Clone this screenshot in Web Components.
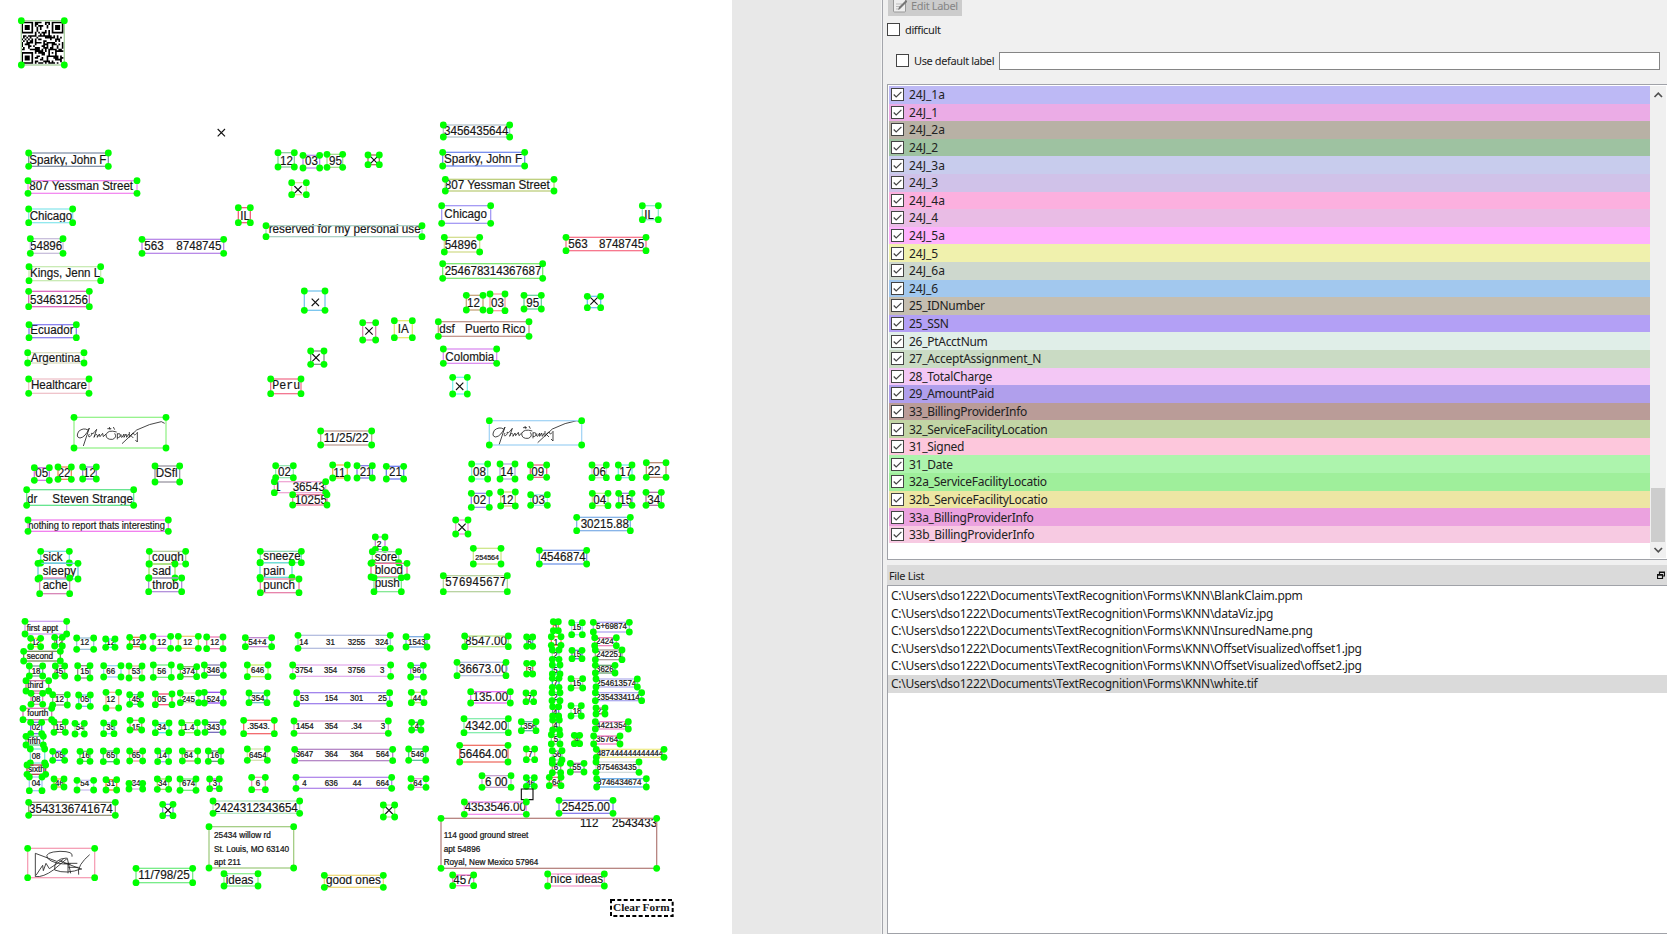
<!DOCTYPE html>
<html lang="en"><head><meta charset="utf-8"><title>Form labels</title>
<style>html,body{margin:0;height:100%;overflow:hidden;background:#f0f0f0}</style></head>
<body><label-app></label-app>
<script>
// Every sheet tile: origin in px, then shapes in thirds of a pixel:
// x1 y1 x2 y2 colour | x baseline size text | ...   ("-" as the box means free text, "X" is a check mark)
const TILES=[
[0,0,`64 62 193 195 #a8cfa0|QR
-|664 398 X`],
[0,140,`86 39 325 79 #8796ab|88 71 11.6 Sparky, John F
84 122 411 160 #f28cf0|88 151 11.6 807 Yessman Street
86 207 218 248 #91e8ee|89 240 11.6 Chicago
91 296 189 340 #c9c0dc|90 331 11.6 54896
426 298 671 340 #b98be8|433 330 11.6 563|529 330 11.6 8748745
87 380 302 422 #c9ebb5|90 412 11.6 Kings, Jenn L
86 454 268 500 #dc6cc0|90 491 11.6 534631256
87 554 229 593 #8c84ee|91 582 11.6 Ecuador
83 638 252 669 #dce0c4|92 667 11.6 Argentina
86 717 267 760 #efc4cb|93 748 11.6 Healthcare
834 38 883 81 #8fcf9f|840 74 11.6 12
909 46 959 84 #bd90ee|915 74 11.6 03
981 43 1028 82 #a6df90|987 74 11.6 95
1104 45 1138 74 #b06c6c|1122 60 X
875 128 919 164 #e2e3a0|894 149 X
715 203 751 248 #f0627c|721 239 11.6 IL
798 257 1266 290 #aed2c6|806 279 11.75 reserved for my personal use
913 453 975 511 #7cc6ee|946 487 X
1088 548 1127 600 #d88bb0|1107 573 X
932 633 972 673 #89968c|948 653 X
812 717 903 761 #f27892|817 748 m11.6 Peru`],
[370,110,`220 45 419 81 #b8c6cc|222 74 11.6 3456435644
218 127 464 168 #7990ee|222 159 11.75 Sparky, John F
226 208 552 243 #bfd080|224 237 11.75 807 Yessman Street
215 287 362 340 #a69cf4|223 325 11.6 Chicago
223 382 329 426 #d5df92|224 416 11.6 54896
218 461 518 505 #7ee875|224 495 11.6 254678314367687
817 287 865 329 #90e8cc|823 326 11.6 IL
588 382 828 422 #f7788e|595 415 11.6 563|687 413 11.6 8748745
289 556 339 600 #c8a77e|291 591 11.6 12
360 552 405 602 #f7a6a0|363 590 11.6 03
462 556 514 597 #70cfa0|469 590 11.6 95
652 559 692 593 #72bdf0|672 573 X
73 632 127 683 #e5e878|83 668 11.6 IA
205 635 477 679 #c49a90|208 668 11.6 dsf|285 668 11.6 Puerto Rico
220 717 380 760 #dc90f0|226 752 11.6 Colombia
248 802 292 852 #81f0ee|269 829 X`],
[0,400,`222 52 498 144 #98f28e|SIG
962 93 1115 135 #c0a298|971 127 11.75 11/25/22
103 203 148 241 #d47ae6|106 232 11.6 05
174 201 214 238 #ef9160|173 232 11.6 22
248 201 289 237 #a080d8|249 232 11.6 12
465 198 539 246 #9d9aa4|467 231 11.6 DSfl
80 269 401 316 #67e590|81 309 11.6 dr|157 309 11.7 Steven Strange
84 360 505 394 #f180ee|85 388 9.35 nothing to report thats interesting
122 454 208 489 #7edce0|128 483 11.6 sick
114 490 234 537 #70c9dc|128 525 11.6 sleepy
119 534 209 581 #d888b8|128 567 11.6 ache
448 454 557 492 #b8ce9d|456 484 11.6 cough
447 492 525 534 #a2e46d|457 525 11.6 sad
446 534 545 575 #b392db|457 567 11.6 throb
781 454 904 488 #8ed9b5|790 480 11.6 sneeze
780 488 876 532 #71ddd9|790 524 11.6 pain
781 537 897 578 #e784ab|790 567 11.6 punch
827 197 880 233 #9ae8b5|834 229 11.6 02
823 245 977 278 #efaad5|823 272 11.6 1|878 272 11.6 36543
878 284 981 315 #e6829e|884 313 11.6 10255
998 195 1042 234 #f0b952|1000 230 11.6 11`],
[360,400,`388 62 665 135 #a7d6f5|SIG2
-9 197 37 234 #8980e8|-1 228 11.6 21
79 199 131 237 #7180ee|87 228 11.6 21
335 192 383 237 #91eee0|339 227 11.6 08
420 192 465 237 #b7aee2|421 227 11.6 14
511 195 560 232 #ee6683|514 227 11.6 09
696 195 739 233 #e0c8dc|699 227 11.6 06
775 195 816 233 #82e8ec|778 227 11.6 17
859 188 918 232 #b98e76|863 226 11.6 22
334 280 388 322 #968cf0|340 312 11.6 02
422 276 466 318 #d1d779|422 312 11.6 12
512 284 562 316 #a8eee9|516 312 11.6 03
697 280 744 317 #bff192|700 312 11.6 04
776 280 816 316 #a481dd|778 312 11.6 15
858 277 904 316 #b077a8|862 311 11.6 34
287 360 324 402 #f29bd5|306 382 X
650 352 811 392 #88b4e8|662 384 11.6 30215.88
340 445 423 492 #cfe78d|346 479 7.1 254564
538 451 680 492 #779be8|542 483 11.6 4546874
46 411 75 448 #ca7de2|50 440 8.4 2
37 455 116 488 #a8c9b7|44 483 11.6 sore
33 490 141 531 #ec739e|44 523 11.6 blood
42 533 124 575 #86e895|44 562 11.6 push
250 527 442 575 #b9d3a2|255 559 m11.4 576945677`],
[0,610,`75 34 200 72 #cfa4f0|80 64 8.2 first appt
92 85 122 110 #eeee3b|95 105 7.9 12
164 82 187 108 #bb779c|163 105 7.9 12
230 84 281 118 #9ec3d8|241 105 7.9 12
317 87 345 112 #59e4e8|319 105 7.9 12
389 82 429 110 #ef824f|395 105 7.9 12
459 79 512 115 #e29af3|472 105 7.9 12
535 79 595 115 #efca7d|550 105 7.9 12
620 81 669 116 #ee81b8|631 105 7.9 12
71 124 181 153 #7d8d60|80 148 8.2 second
88 168 128 198 #81a59b|95 191 7.9 18
166 168 194 198 #e27db3|163 191 7.9 45
233 167 270 204 #9d8693|241 191 7.9 15
311 167 363 201 #9dd1ef|319 191 7.9 66
387 168 426 204 #e4b9a2|395 191 7.9 53
460 165 514 202 #7de88d|472 191 7.9 56
541 170 590 200 #90b173|545 191 7.9 374
613 165 670 196 #9088b3|620 189 7.9 346
78 212 146 243 #c47799|82 234 8.2 third
93 250 128 283 #db8db9|95 276 7.9 08
158 254 202 285 #979e8f|165 276 7.9 12
236 255 271 289 #79bae6|241 276 7.9 05
318 247 356 294 #f2b294|319 276 7.9 12
389 254 422 283 #6caaa9|395 275 7.9 45
466 252 516 284 #ef587b|472 275 7.9 05
541 249 596 278 #d9e1c2|545 275 7.9 245
613 247 670 279 #9556ed|620 275 7.9 524
69 295 155 329 #d87bb4|82 318 8.2 fourth
92 337 125 371 #7771e8|95 361 7.9 02
162 336 196 367 #ae7e79|165 360 7.9 15
225 340 253 372 #b0e9ab|227 360 7.9 54
311 339 342 371 #8fc6ec|319 360 7.9 35
390 331 425 360 #d78c90|395 360 7.9 15
466 339 507 368 #5ee0eb|472 360 7.9 34
545 338 592 368 #a7e37c|550 360 7.9 1.4
615 337 669 367 #7b70bd|620 360 7.9 343
78 379 130 405 #71c694|82 401 8.2 fifth
91 417 134 459 #82e6dc|95 446 7.9 08
158 424 194 451 #7581ec|165 445 7.9 05
240 424 270 454 #74bf7a|243 445 7.9 16
310 423 350 455 #6aae88|319 445 7.9 65
389 423 428 453 #f097a0|395 445 7.9 65
473 423 506 455 #aaabf1|474 445 7.9 14
547 423 593 453 #b9a479|552 445 7.9 64
625 423 663 454 #718e87|631 445 7.9 16
81 465 137 493 #b54955|84 486 8.2 sixth
88 501 126 542 #a9c8f4|95 529 7.9 04
162 507 192 531 #edb152|165 529 7.9 46
231 511 281 540 #ccc2ef|241 529 7.9 54
318 509 350 540 #ef912d|319 529 7.9 31
387 520 428 537 #d8b1e6|395 529 7.9 34
472 507 506 538 #a6d66c|474 529 7.9 34
540 507 588 541 #7ee884|546 529 7.9 674
629 507 658 536 #d43ee5|638 529 7.9 3`],
[230,610,`46 83 125 110 #c28ad0|55 104 8.1 54+4
204 76 481 115 #b6bfe0|208 104 7.9 14|288 104 7.9 31|353 104 7.9 3255|436 104 7.9 324
528 80 591 111 #80ade1|534 104 7.9 1543
52 165 114 200 #cbe975|63 189 7.9 646
188 165 482 199 #e4b1ed|195 189 7.9 3754|282 189 7.9 354|353 189 7.9 3756|450 189 7.9 3
542 166 580 201 #a289f0|547 189 7.9 96
57 249 111 278 #70bfc1|64 273 7.9 354
200 248 479 281 #a285ec|210 273 7.9 53|284 273 7.9 154|360 273 7.9 301|444 273 7.9 25
544 247 582 278 #cfdc83|548 272 7.9 44
41 331 133 371 #f26d70|52 358 8.1 .3543.
192 333 475 370 #dca0cb|198 358 7.9 1454|284 358 7.9 354|363 358 7.9 .34|452 358 7.9 3
545 337 573 360 #558da0|554 358 7.9 4
52 417 112 451 #d8e0b6|57 443 7.9 6454
194 418 488 452 #b689c7|197 442 7.9 3647|284 442 7.9 364|360 442 7.9 364|438 442 7.9 564
536 417 587 451 #68baa0|543 442 7.9 546
65 502 106 539 #ef94b9|77 527 7.9 6
198 502 485 535 #b38beb|217 527 7.9 4|284 527 7.9 636|368 527 7.9 44|438 527 7.9 664
543 506 588 532 #ec91dd|550 527 7.9 64`],
[450,610,`44 78 175 110 #bce690|45 104 11.6 8547.00
21 157 168 197 #b7c4e2|27 189 11.6 36673.00
62 245 181 279 #e970f1|68 274 11.6 135.00
42 326 175 368 #87edaf|46 360 11.6 4342.00
29 406 174 456 #ef7469|28 444 11.6 56464.00
96 497 183 532 #c6a5d0|105 528 11.6 6 00
230 81 248 109 #72a3bd|232 104 7.9 6
230 160 248 192 #ea5370|232 189 7.9 3
228 249 251 275 #cf5f88|232 272 7.9 7
214 335 258 362 #66baa1|220 357 7.9 356
229 417 254 449 #f0a5af|234 442 7.9 7
229 503 253 529 #54d6e8|228 527 7.9 46
-|214 537 SQ
310 35 325 62 #e98b40|311 60 7.9 1
304 80 333 106 #f48a51|311 104 7.9 1
307 120 327 148 #b8d4c0|310 145 7.9 2
307 165 330 192 #46d8e6|310 188 7.9 5
307 205 327 232 #3ca2c4|310 229 7.9 7
306 248 330 272 #7ee7a1|310 271 7.9 2
308 290 326 318 #a35be0|309 316 7.9 4
308 330 328 360 #a4b785|310 355 7.9 4
304 374 330 402 #85ea8b|311 395 7.9 5
307 422 336 450 #a4ccb1|308 441 7.9 56
307 460 332 488 #ad8590|311 481 7.9 6
298 502 333 527 #ef6c83|306 525 7.9 64
365 38 397 74 #a7dced|367 60 7.9 15
366 121 396 146 #6f71dc|367 141 7.9 15
363 206 398 234 #e2b5be|367 229 7.9 15
363 287 394 318 #a4efc4|368 313 7.9 18
373 376 389 401 #ee9e3b|374 396 7.9 4
361 460 402 486 #b17ca9|367 480 7.9 55
430 37 538 66 #b3aaf0|438 57 7.9 5+69874
434 83 499 107 #eb84b9|438 101 7.9 2424
436 120 516 149 #aaa19b|438 142 7.9 242251
436 166 495 189 #6ea677|438 186 7.9 3626
438 207 562 231 #b8b7ee|439 227 8 254613574
436 248 575 272 #b0aeef|438 270 8 2354334114
438 294 465 312 #df749f|440 312 7.9 22
436 335 535 357 #ef99d0|438 354 8 4421354
431 378 510 402 #ef7fc4|438 397 8 35764
439 418 642 442 #f0ec8f|440 439 8 487444444444444
438 456 567 487 #d4ddda|440 480 8 875463435
440 506 589 531 #73b3ea|441 524 8 8746434674`],
[0,790,`86 37 346 76 #9b9a84|87 68 11.6 3543136741674
488 43 519 77 #8782f1|504 61 X
639 33 899 70 #b8e9c2|642 66 11.6 2424312343654
627 110 881 234 #a6ce87|642 144 8.25 25434 willow rd|642 185 8.25 St. Louis, MO 63140|642 226 8.25 apt 211
83 175 284 263 #f5a1b7|SIG3
408 235 578 278 #79ec89|415 266 11.75 11/798/25
672 251 774 288 #92ef98|677 283 11.6 ideas
973 256 1150 292 #efdb7c|978 283 11.75 good ones`],
[350,790,`100 45 134 81 #c4e6a0|117 61 X
343 36 529 73 #f292ee|344 63 11.6 4353546.00
627 31 789 70 #8b80ec|635 63 11.6 25425.00
273 85 920 235 #b88783|690 111 11.6 112|786 111 11.6 2543433|281 144 8.25 114 good ground street|281 185 8.25 apt 54896|281 226 8.15 Royal, New Mexico 57964
308 255 371 287 #ef82d3|310 281 11.6 457
593 252 763 288 #f3a0cd|601 280 11.75 nice ideas
-|780 327 CLEAR`]];
const SIGNATURE='M264 90Q250 82 236 94Q226 112 240 114Q256 112 268 84L250 138M268 102q-6 10 2 8q8-6 4-10q6 2 8-2L290 88L282 112q6-14 10-6v6l6-10q2 8 2 8l8-10l2 10l8-8M322 86h12M328 81l2 8M340 81l4 8M350 96Q324 88 318 104Q318 120 338 118Q352 112 344 100M352 100v18M352 102q12-4 8 8q-4 4-8 2M364 104q-4 8 2 8l6-10v10l6-10l2 10l6-10M388 96v16l10-12l-6 6l8 8M400 98q2 12 10 2M412 96v30l-6-6M366 131L410 90Q450 70 484 65L494 70';
const SCRAWL='M106 190V260Q130 262 160 240L202 205L212 250M106 190L170 214M108 256L128 226L130 242L138 220L148 236L190 208M216 200Q222 184 180 184Q132 186 142 204Q160 224 212 222M200 204Q160 206 164 240Q200 254 245 236M178 212L245 238M192 220H232M204 222V250M205 232H236M236 254Q232 240 242 224T269 194';
function qr(){let s='',seed=7;const N=25,u=5.06,f=(x,y)=>{for(const[a,b]of[[0,0],[18,0],[0,18]]){const i=x-a,j=y-b;if(i>=-1&&i<8&&j>=-1&&j<8){const d=Math.max(Math.abs(i-3),Math.abs(j-3));return d==3||d<2}}const d=Math.max(Math.abs(x-18),Math.abs(y-18));if(d<3)return d!=1;return null};
 for(let y=0;y<N;y++)for(let x=0;x<N;x++){seed=(seed*1103515245+12345)%2147483648;const v=f(x,y);if(v===null?(seed>>16)%2:v)s+=`M${64+x*u} ${65+y*u}h${u}v${u}h-${u}z`}
 return `<path d="${s}"/>`}
function ink(t){
 if(t=='QR')return qr();
 if(t=='SIG')return `<path class="pen" d="${SIGNATURE}"/>`;
 if(t=='SIG2')return `<path class="pen" transform="translate(167,-3)" d="${SIGNATURE}"/>`;
 if(t=='SIG3')return `<path class="pen" d="${SCRAWL}"/>`;
 const p=t.split(' '),x=+p[0],y=+p[1];
 if(p[2]=='X')return `<path class="x" d="M${x-11} ${y-11}l22 22m0-22l-22 22"/>`;
 if(p[2]=='SQ')return `<path class="x" d="M${x} ${y}h35v32h-35z"/>`;
 if(p[2]=='CLEAR')return `<rect x="${x+3}" y="${y+3}" width="185" height="48" fill="none" stroke="#000" stroke-width="6" stroke-dasharray="12 7"/><text x="${x+9}" y="${y+36}" font-size="33.9" font-weight="bold" font-family="Liberation Serif,serif">Clear Form</text>`;
 const m=p[2][0]=='m',z=+p[2].replace('m','');
 // the form's type is drawn slightly taller than wide
 return `<text transform="matrix(1 0 0 1.07 ${x} ${y})" font-size="${z*3}" class="${z<9?'s':'n'}"${m?' font-family="Liberation Mono,monospace"':''}>${p.slice(3).join(' ')}</text>`;
}
class AnnotatedShape extends HTMLElement{
 connectedCallback(){
  const[ox,oy]=this.origin,parts=this.spec.split('|'),b=parts[0].split(' ');
  let box='';
  if(b.length>1){const[x,y,X,Y]=b.map(Number);
   box=`<rect x="${x}" y="${y}" width="${X-x}" height="${Y-y}" fill="none" stroke="${b[4]}" stroke-width="4"/>`+[[x,y],[X,y],[X,Y],[x,Y]].map(c=>`<circle cx="${c[0]}" cy="${c[1]}" r="10.2"/>`).join('')}
  this.style.left=ox+'px';this.style.top=oy+'px';
  this.attachShadow({mode:'open'}).innerHTML=`<style>:host{position:absolute;display:block;width:1px;height:1px}svg{display:block;width:1px;height:1px;overflow:visible;font-family:"Liberation Sans",Arial,sans-serif}
  text{fill:#161616;white-space:pre}.s{stroke:#161616;stroke-width:.7}.n{stroke:#161616;stroke-width:.5}.x{fill:none;stroke:#111;stroke-width:3.4}.pen{fill:none;stroke:#222;stroke-width:2.5}circle{fill:#0f0}</style><svg viewBox="0 0 3 3">${parts.slice(1).map(ink).join('')}${box}</svg>`}
}
customElements.define('annotated-shape',AnnotatedShape);
customElements.define('form-sheet',class extends HTMLElement{connectedCallback(){
 const r=this.attachShadow({mode:'open'});r.innerHTML='<style>:host{display:block;position:relative;width:732px;height:100%;background:#fff}</style>';
 for(const[x,y,t]of TILES)for(const l of t.split('\n')){const e=document.createElement('annotated-shape');e.origin=[x,y];e.spec=l;r.append(e)}}});
customElements.define('check-box',class extends HTMLElement{connectedCallback(){
 this.attachShadow({mode:'open'}).innerHTML=`<style>:host{display:block;flex:none;width:13px;height:13px}svg{display:block}</style><svg width="13" height="13"><rect x=".5" y=".5" width="12" height="12" fill="#fff" stroke="#444"/>${this.hasAttribute('checked')?'<path d="M2.7 6.5L5.2 9L10.4 3.8" fill="none" stroke="#444" stroke-width="1.2"/>':''}</svg>`}});
customElements.define('label-row',class extends HTMLElement{connectedCallback(){
 this.attachShadow({mode:'open'}).innerHTML=`<style>:host{display:flex;align-items:center;height:17.6px;padding-left:2px;gap:5px;white-space:pre;background:${this.getAttribute('color')}}</style><check-box checked></check-box><slot></slot>`}});
customElements.define('label-list',class extends HTMLElement{connectedCallback(){
 const rows=`24J_1a #bdb9f5,24J_1 #ebace6,24J_2a #b8b1a5,24J_2 #9ec2a1,24J_3a #c8cced,24J_3 #d0c2e9,24J_4a #fcb0df,24J_4 #e9bce5,24J_5a #feb2fd,24J_5 #f0f1ad,24J_6a #ced8ce,24J_6 #a2c8ee,25_IDNumber #c5beb0,25_SSN #b3a0f5,26_PtAcctNum #e0eee8,27_AcceptAssignment_N #cadbc4,28_TotalCharge #f3c7f5,29_AmountPaid #b09fec,33_BillingProviderInfo #ba9c98,32_ServiceFacilityLocation #c2d5a5,31_Signed #fdc7dc,31_Date #adf4ad,32a_ServiceFacilityLocatio #9fef9b,32b_ServiceFacilityLocatio #ede6a4,33a_BillingProviderInfo #eba2df,33b_BillingProviderInfo #f7cae2`.split(',').map(s=>s.split(' '));
 this.attachShadow({mode:'open'}).innerHTML=`<style>:host{display:flex;box-sizing:border-box;height:476px;border:1px solid #a0a2a8;border-right:0;background:#fff;padding:1px}.r{flex:1}.tight{letter-spacing:-.28px}.bar{width:16px;background:#f0f0f0;display:flex;flex-direction:column;align-items:center}.thumb{width:14px;height:54px;margin-top:384px;background:#cdcdcd}svg{display:block;flex:none}</style><div class="r">${rows.map(r=>`<label-row${r[0].startsWith('24J')?'':' class="tight"'} color="${r[1]}">${r[0]}</label-row>`).join('')}</div><div class="bar"><svg width="16" height="18"><path d="M4.5 11l3.8-3.8L12 11" fill="none" stroke="#505050" stroke-width="1.7"/></svg><div class="thumb"></div><svg width="16" height="16"><path d="M4.5 6l3.8 3.8L12 6" fill="none" stroke="#505050" stroke-width="1.7"/></svg></div>`}});
customElements.define('file-list',class extends HTMLElement{connectedCallback(){
 const f=['BlankClaim.ppm','dataViz.jpg','InsuredName.png','OffsetVisualized\\offset1.jpg','OffsetVisualized\\offset2.jpg','white.tif'];
 this.attachShadow({mode:'open'}).innerHTML=`<style>:host{display:flex;flex-direction:column;flex:1}.t{box-sizing:border-box;height:20px;background:#dadada;display:flex;align-items:center;justify-content:space-between;padding:0 2px;font-size:11px;letter-spacing:-.35px}.l{flex:1;background:#fff;border:1px solid #a0a2a8;border-right:0;padding-top:1px}.l div{height:17.6px;line-height:17.6px;padding-left:3px;white-space:pre;letter-spacing:-.28px}.l div:last-child{background:#dadada}</style>
 <div class="t"><span>File List</span><svg width="8" height="8"><path d="M2.5 4V1h5v4H5.500M2.500 1.500h5M.5 3.500h5v4h-5zM.5 4.200h5" fill="none" stroke="#111" stroke-width="1.2"/></svg></div><div class="l">${f.map(n=>`<div>C:\\Users\\dso1222\\Documents\\TextRecognition\\Forms\\KNN\\${n}</div>`).join('')}</div>`}});
customElements.define('side-panel',class extends HTMLElement{connectedCallback(){
 this.attachShadow({mode:'open'}).innerHTML=`<style>:host{display:flex;flex-direction:column;flex:1;background:#f0f0f0;border-left:1px solid #a4a6ac;padding-left:4px;font:12px "Noto Sans","Open Sans",sans-serif;color:#222}
 .b{width:74px;height:16px;margin-left:1px;background:#ccc;color:#858585;display:flex;gap:4px;align-items:center;font-size:11px;letter-spacing:-.35px;box-sizing:border-box;padding:0 0 5px 5px;white-space:pre}.b svg{flex:none}.c{display:flex;align-items:center;gap:5px;font-size:11px;letter-spacing:-.38px;white-space:pre}.d{height:13px;margin-top:7px;margin-bottom:15px}.u{height:19px;margin:0 7px 14px 9px;gap:5px}.i{box-sizing:border-box;height:18px;border:1px solid #858585;background:#fff;flex:1;margin-left:4px}.u span{width:76px}file-list{margin-top:5px}label-list{flex:none}</style>
 <div class="b"><svg width="14" height="16" viewBox="0 0 14 16"><rect x=".5" y="1" width="12" height="13" rx="1" fill="#eee" stroke="#999"/><path d="M3 6h6M3 8.500h5M3 11h4" stroke="#bbb"/><path d="M5 12l1-3 7-7 1.500 1.500-7 7z" fill="#777"/></svg><span>Edit Label</span></div>
 <div class="c d"><check-box></check-box><span>difficult</span></div>
 <div class="c u"><check-box></check-box><span>Use default label</span><div class="i"></div></div><label-list></label-list><file-list></file-list>`}});
customElements.define('label-app',class extends HTMLElement{connectedCallback(){
 this.attachShadow({mode:'open'}).innerHTML=`<style>:host{display:flex;width:1667px;height:934px;overflow:hidden}.canvas{width:881px;flex:none;background:#e8e8e8;border-right:1px solid #f4f4f4}</style><div class="canvas"><form-sheet></form-sheet></div><side-panel></side-panel>`}});
</script></body></html>
